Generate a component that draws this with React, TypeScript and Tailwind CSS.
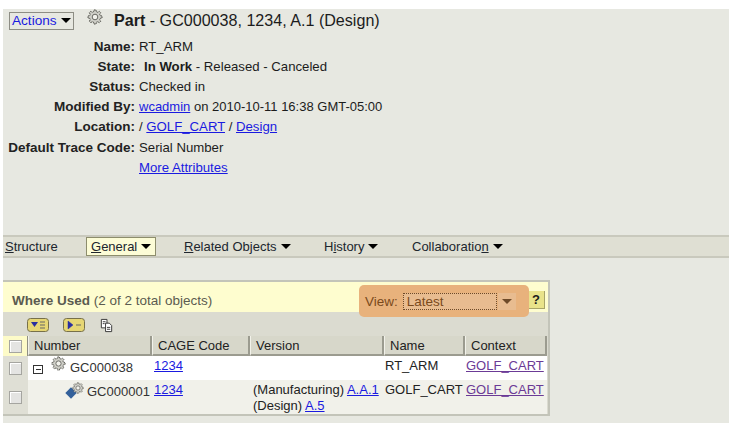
import React from 'react';

const Gear = ({ className }: { className?: string }) => (
  <svg viewBox="0 0 16 16" className={className}>
    <path
      d="M7 1h2l.4 1.8 1.3.5 1.6-1 1.4 1.4-1 1.6.5 1.3L15 7v2l-1.8.4-.5 1.3 1 1.6-1.4 1.4-1.6-1-1.3.5L9 15H7l-.4-1.8-1.3-.5-1.6 1-1.4-1.4 1-1.6-.5-1.3L1 9V7l1.8-.4.5-1.3-1-1.6 1.4-1.4 1.6 1 1.3-.5z"
      fill="#cfcfc8"
      stroke="#55554f"
      strokeWidth="1"
      strokeDasharray="1.6 0.5"
    />
    <circle cx="8" cy="8" r="2.8" fill="#f2f2ec" stroke="#6a6a64" strokeWidth="1" />
  </svg>
);

const Caret = ({ className = 'border-t-black' }: { className?: string }) => (
  <span className={`inline-block w-0 h-0 border-x-[5px] border-x-transparent border-t-[5px] ${className}`} />
);

const Checkbox = () => (
  <span className="block w-[13px] h-[13px] border border-[#a5a5a0] bg-[#e4e4e2] shadow-[inset_1px_1px_0_#fff]" />
);

const attrs: [string, React.ReactNode][] = [
  ['Name:', 'RT_ARM'],
  [
    'State:',
    <>
      <b className="ml-[5px]">In Work</b> - Released - Canceled
    </>,
  ],
  ['Status:', 'Checked in'],
  [
    'Modified By:',
    <span className="text-[13px]">
      <a className="text-[#1a1ae0] underline">wcadmin</a> on 2010-10-11 16:38 GMT-05:00
    </span>,
  ],
  [
    'Location:',
    <>
      / <a className="text-[#1a1ae0] underline">GOLF_CART</a> / <a className="text-[#1a1ae0] underline">Design</a>
    </>,
  ],
  ['Default Trace Code:', 'Serial Number'],
  ['', <a className="text-[#1a1ae0] underline">More Attributes</a>],
];

const menus = [
  { pre: '', key: 'R', post: 'elated Objects', w: 'w-[140px]' },
  { pre: 'H', key: 'i', post: 'story', w: 'w-[88px]' },
  { pre: 'Collaboratio', key: 'n', post: '', w: 'w-auto' },
];

export default function App() {
  return (
    <div className="w-[729px] h-[423px] overflow-hidden bg-white pt-[9px] pl-[3px] font-['Liberation_Sans',Arial,sans-serif] text-[13.2px] leading-[15px] text-[#1c1c1c]">
      <div className="h-[414px] bg-[#e7e8e1] flex flex-col">
        {/* Header */}
        <div className="h-[226px] shrink-0">
          <div className="flex items-center h-[23px]">
            <button className="ml-[6px] w-[65px] h-[18px] flex items-center gap-[4px] pl-[2px] border border-[#8d8d84] text-[13.6px] text-[#1a1ae0]">
              Actions <Caret />
            </button>
            <Gear className="ml-[13px] mb-[7px] w-[16px] h-[16px]" />
            <h1 className="ml-[11px] mb-[2px] text-[16.1px] leading-[18px] font-normal">
              <b>Part</b> - GC000038, 1234, A.1 (Design)
            </h1>
          </div>
          <div className="mt-[4px]">
            {attrs.map(([label, value], i) => (
              <div key={i} className="flex h-[20.2px] items-center">
                <span className="w-[132px] text-right font-bold text-[13.5px] whitespace-nowrap text-[#222]">{label}</span>
                <span className="ml-[4px] whitespace-nowrap">{value}</span>
              </div>
            ))}
          </div>
        </div>

        {/* Menu bar */}
        <div className="h-[23px] shrink-0 flex items-center bg-[#dfdfd3] border-y-2 border-[#c9c9bd] text-[#20262e] text-[13px]">
          <span className="ml-[2px] w-[81px]">
            <u>S</u>tructure
          </span>
          <span className="w-[70px] h-[19px] flex items-center gap-[4px] pl-[4px] border border-[#8d8d6c] bg-[#fcfcd6]">
            <span>
              <u>G</u>eneral
            </span>
            <Caret />
          </span>
          <span className="w-[28px]" />
          {menus.map((m) => (
            <span key={m.post + m.pre} className={`${m.w} flex items-center gap-[4px]`}>
              <span>
                {m.pre}
                <u>{m.key}</u>
                {m.post}
              </span>
              <Caret />
            </span>
          ))}
        </div>

        {/* Where Used table */}
        <div className="mt-[22px] w-[547px] h-[136px] shrink-0 bg-[#dbdbd0] border-t-2 border-r-2 border-b-2 border-[#c3c4b9]">
          <div className="h-[30px] bg-[#fefdcf] flex items-center relative pl-[9px] pt-[7px]">
            <span className="text-[#5b5b50] text-[13.5px]">
              <b>Where Used</b> (2 of 2 total objects)
            </span>
            <span className="absolute right-[3px] top-[9px] w-[17px] h-[18px] flex items-center justify-center bg-[#e9e38a] border-r border-b border-[#a8a468] font-bold text-[13px]">
              ?
            </span>
            {/* highlight callout */}
            <div className="absolute left-[356px] top-[3px] w-[170px] h-[32px] rounded-[5px] bg-[#e8b27c] flex items-center pl-[6px] text-[#7a4a1c] text-[13.5px]">
              <span>View:</span>
              <span className="ml-[5px] w-[94px] h-[17px] flex items-center pl-[3px] bg-[#e8bc90] border border-dotted border-[#6e4a28]">Latest</span>
              <span className="w-[18px] h-[17px] ml-[1px] flex items-center justify-center bg-[#e8bc90]">
                <Caret className="border-t-[#6e4a28]" />
              </span>
            </div>
          </div>
          <div className="h-[24px] flex items-center pl-[24px] pt-[2px] gap-[14px]">
            <svg viewBox="0 0 22 14" className="w-[22px] h-[14px]">
              <rect x="0.5" y="0.5" width="21" height="13" rx="3" fill="#e6d674" stroke="#77704a" />
              <path d="M4 4h7l-3.5 5z" fill="#2a2fa0" />
              <path d="M13 4h5M13 7h5M13 10h5" stroke="#666" />
            </svg>
            <svg viewBox="0 0 22 14" className="w-[22px] h-[14px]">
              <rect x="0.5" y="0.5" width="21" height="13" rx="3" fill="#e6d674" stroke="#77704a" />
              <path d="M5 3v8l5-4z" fill="#2a2fa0" stroke="#2a2fa0" strokeWidth="0.5" />
              <path d="M13 7h5" stroke="#666" />
            </svg>
            <svg viewBox="0 0 16 16" className="w-[15px] h-[15px]">
              <path d="M2.5 1.5h6v9h-6z" fill="#fff" stroke="#333" />
              <path d="M7 5.5h4l2.5 2.5v6.5H7z" fill="#fff" stroke="#333" />
              <path d="M4 4h3M4 6h2M8.5 10h3.5M8.5 12h3.5" stroke="#333" />
            </svg>
          </div>
          <table className="table-fixed border-separate border-spacing-0 w-[544px] text-[#222] text-[13px]">
            <colgroup>
              <col className="w-[25px]" />
              <col className="w-[124px]" />
              <col className="w-[98px]" />
              <col className="w-[134px]" />
              <col className="w-[81px]" />
              <col className="w-[82px]" />
            </colgroup>
            <thead>
              <tr className="h-[20px] bg-[#d7d7ca] text-left">
                <th className="bg-[#fdfbc8] border-r border-[#8f8f84] px-[6px]">
                  <Checkbox />
                </th>
                {['Number', 'CAGE Code', 'Version', 'Name', 'Context'].map((h) => (
                  <th key={h} className="font-normal pl-[5px] pt-[1px] border-r-2 border-b-2 border-[#9b9b8f] border-l border-l-[#f2f2ea]">
                    {h}
                  </th>
                ))}
              </tr>
            </thead>
            <tbody className="align-top">
              <tr className="h-[24px] bg-white">
                <td className="bg-[#dfdfd5] px-[6px] align-middle">
                  <Checkbox />
                </td>
                <td className="pl-[5px]">
                  <span className="flex items-center">
                    <span className="mt-[8px] w-[10px] h-[9px] border-[1.5px] border-[#333] flex items-center justify-center">
                      <span className="w-[5px] h-[1px] bg-[#333]" />
                    </span>
                    <Gear className="ml-[8px] mb-[4px] w-[15px] h-[15px]" />
                    <span className="ml-[4px] mt-[3px] text-[#333]">GC000038</span>
                  </span>
                </td>
                <td className="pl-[2px] pt-[2px]">
                  <a className="text-[#1a1ae0] underline">1234</a>
                </td>
                <td />
                <td className="pl-[1px] pt-[2px]">RT_ARM</td>
                <td className="pl-[1px] pt-[2px]">
                  <a className="text-[#6b3a96] underline">GOLF_CART</a>
                </td>
              </tr>
              <tr className="h-[33px] bg-[#f1f1ea]">
                <td className="bg-[#dfdfd5] px-[6px] align-middle">
                  <Checkbox />
                </td>
                <td className="pl-[39px]">
                  <span className="flex items-center whitespace-nowrap">
                    <span className="relative w-[17px] h-[16px] shrink-0">
                      <span className="absolute left-0 top-[7px] w-[8px] h-[8px] rotate-45 bg-[#33609a]" />
                      <Gear className="absolute left-[5px] top-0 w-[12px] h-[12px]" />
                    </span>
                    <span className="ml-[3px] mt-[4px] text-[#333]">GC000001</span>
                  </span>
                </td>
                <td className="pl-[2px] pt-[2px]">
                  <a className="text-[#1a1ae0] underline">1234</a>
                </td>
                <td className="pl-[3px] pt-[2px] leading-[16px] whitespace-nowrap">
                  (Manufacturing) <a className="text-[#1a1ae0] underline">A.A.1</a>
                  <br />
                  (Design) <a className="text-[#1a1ae0] underline">A.5</a>
                </td>
                <td className="pl-[1px] pt-[2px]">GOLF_CART</td>
                <td className="pl-[1px] pt-[2px]">
                  <a className="text-[#6b3a96] underline">GOLF_CART</a>
                </td>
              </tr>
            </tbody>
          </table>
        </div>
      </div>
    </div>
  );
}
